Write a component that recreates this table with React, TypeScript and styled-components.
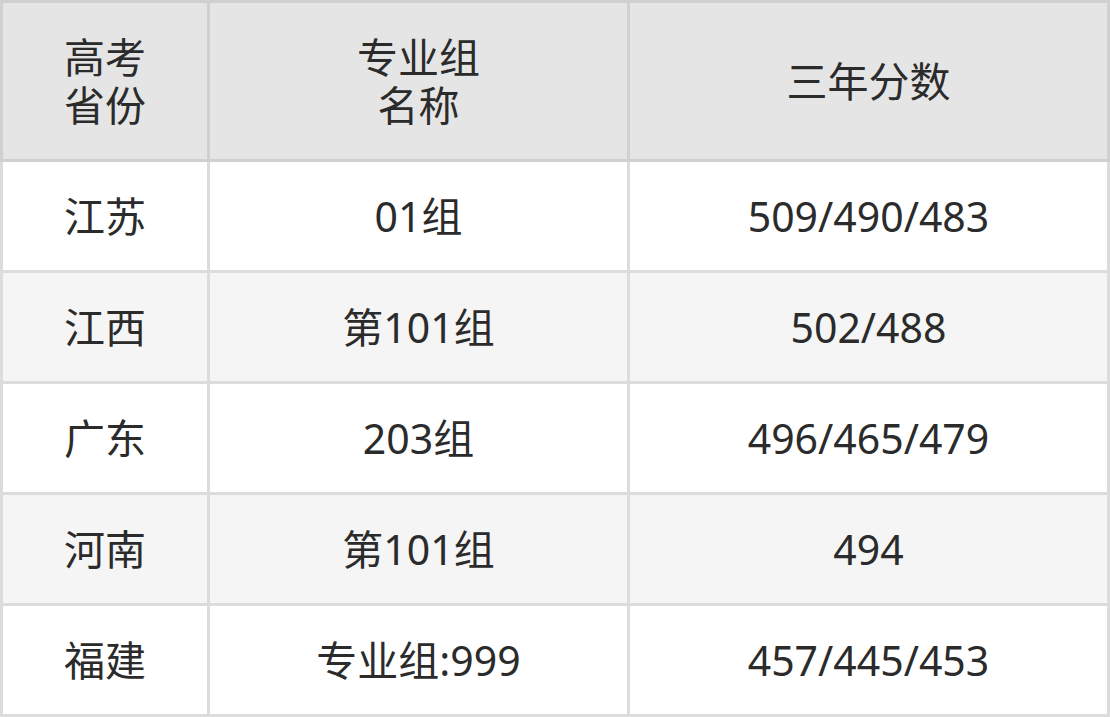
import React from "react";
import styled, { createGlobalStyle } from "styled-components";

const Global = createGlobalStyle`
  html, body { margin: 0; padding: 0; background: #ffffff; }
  * { box-sizing: border-box; }
`;

const Table = styled.div`
  display: grid;
  grid-template-columns: 210px 420px 480px;
  grid-template-rows: 162px repeat(5, 111px);
  width: 1110px;
  font-family: "Noto Sans", "Noto Sans CJK SC", sans-serif;
  font-size: 41px;
  color: #2b2b2b;
`;

const Cell = styled.div<{ $head?: boolean; $first?: boolean; $alt?: boolean }>`
  display: flex;
  align-items: center;
  justify-content: center;
  text-align: center;
  line-height: 48px;
  background: ${(p) => (p.$head ? "#e5e5e5" : p.$alt ? "#f5f5f5" : "#ffffff")};
  border-right: 3px solid ${(p) => (p.$head ? "#d0d0d0" : "#dcdcdc")};
  border-bottom: 3px solid ${(p) => (p.$head ? "#d0d0d0" : "#dcdcdc")};
  border-left: ${(p) => (p.$first ? `3px solid ${p.$head ? "#d0d0d0" : "#dcdcdc"}` : "none")};
  border-top: ${(p) => (p.$head ? "3px solid #d0d0d0" : "none")};
`;

const rows = [
  ["江苏", "01组", "509/490/483"],
  ["江西", "第101组", "502/488"],
  ["广东", "203组", "496/465/479"],
  ["河南", "第101组", "494"],
  ["福建", "专业组:999", "457/445/453"],
];

export default function App() {
  return (
    <>
      <Global />
      <Table>
        <Cell $head $first>高考<br />省份</Cell>
        <Cell $head>专业组<br />名称</Cell>
        <Cell $head>三年分数</Cell>
        {rows.map((r, i) =>
          r.map((t, j) => (
            <Cell key={`${i}-${j}`} $first={j === 0} $alt={i % 2 === 1}>
              {t}
            </Cell>
          ))
        )}
      </Table>
    </>
  );
}
